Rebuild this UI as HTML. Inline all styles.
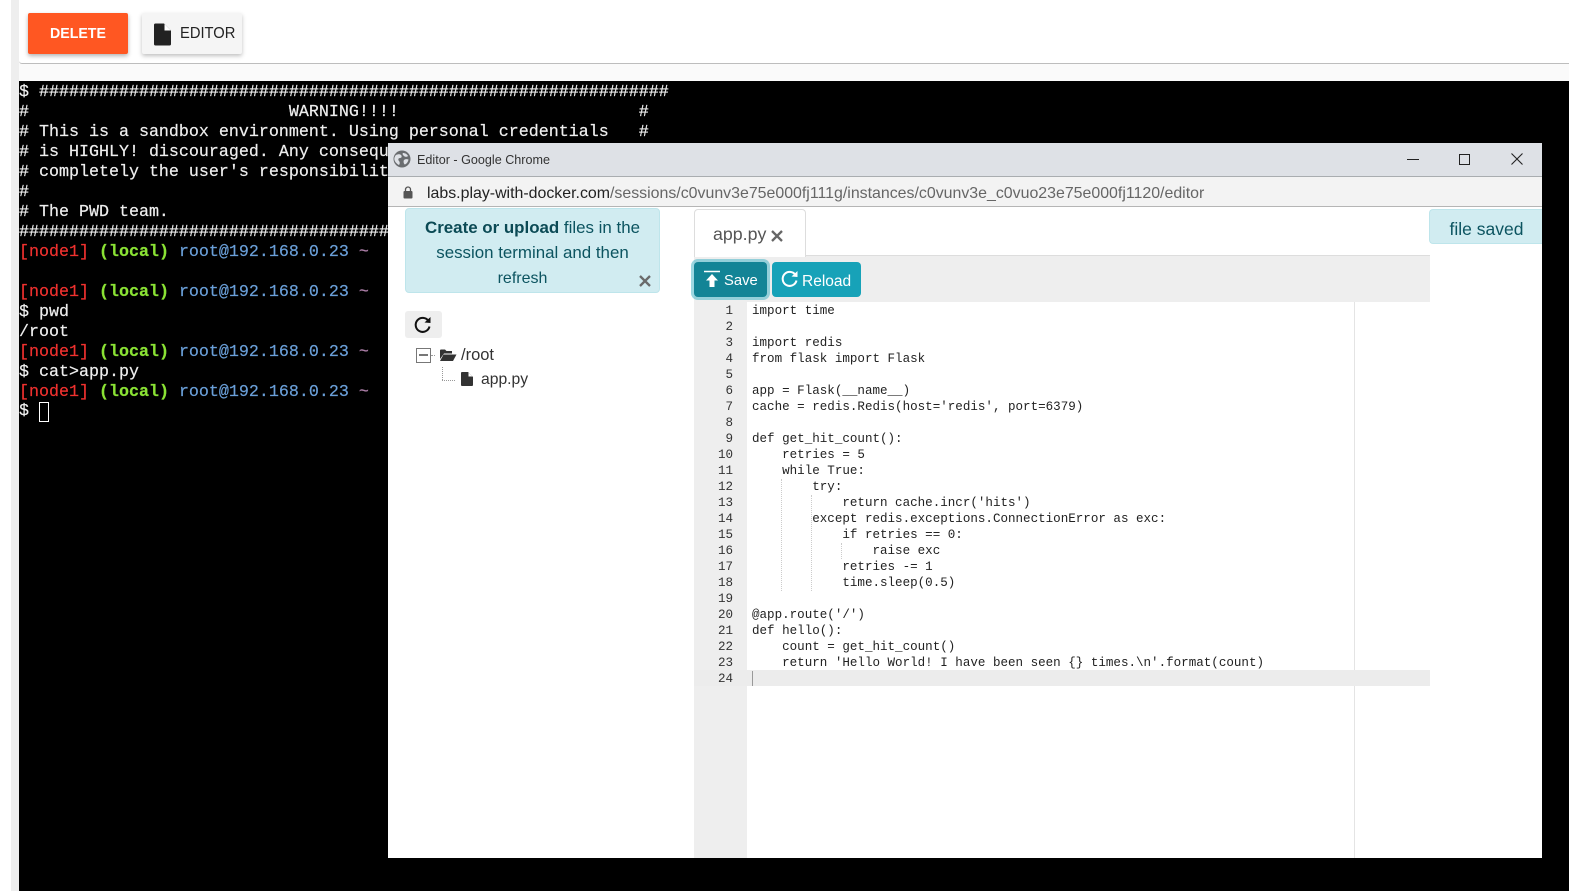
<!DOCTYPE html>
<html>
<head>
<meta charset="utf-8">
<title>Editor</title>
<style>
html,body{margin:0;padding:0;width:1569px;height:891px;overflow:hidden;background:#fafafa;font-family:"Liberation Sans",sans-serif}
.a{position:absolute}
#term{position:absolute;left:19px;top:81px;width:1550px;height:810px;background:#000;overflow:hidden}
#term div{position:absolute;left:0;margin-top:2px;height:20px;font:16.67px/20px "Liberation Mono",monospace;color:#eee;white-space:pre;-webkit-text-stroke:.2px currentColor}
.r{color:#f0312f}.g{color:#8ae234;font-weight:bold}.b{color:#6a9fd8}.p{color:#ad7fa8}
#code div{position:absolute;left:0;height:16px;font:12.55px/16px "Liberation Mono",monospace;color:#222;white-space:pre}
#nums div{position:absolute;width:39px;text-align:right;left:0;font:12.55px/16px "Liberation Mono",monospace;color:#333}
</style>
</head>
<body>
<div class="a" style="left:0;top:0;width:11px;height:891px;background:#fff"></div>
<div class="a" style="left:11px;top:0;width:8px;height:891px;background:#eee"></div>
<div class="a" style="left:19px;top:0;width:1550px;height:63px;background:#fff;border-bottom:1px solid #bdbdbd;border-radius:0 0 0 3px"></div>

<div class="a" style="left:28px;top:13px;width:100px;height:41px;background:#ff5722;border-radius:2px;box-shadow:0 2px 4px rgba(0,0,0,.3)"></div>
<div class="a" style="left:50px;top:13px;line-height:41px;font-size:15px;font-weight:bold;color:#fff;transform:scaleX(.945);transform-origin:0 50%">DELETE</div>
<div class="a" style="left:142px;top:13px;width:100px;height:41px;background:#f5f5f5;border-radius:2px;box-shadow:0 2px 4px rgba(0,0,0,.25)"></div>
<svg class="a" style="left:153px;top:23px" width="19" height="23" viewBox="0 0 19 23"><path d="M1 2a1.500 1.500 0 0 1 1.500-1.500H11l7 7V21a1.500 1.500 0 0 1-1.500 1.500h-14A1.500 1.500 0 0 1 1 21z" fill="#222"/><path d="M11.500 1v6.500H18z" fill="#fff"/></svg>
<div class="a" style="left:180px;top:13px;line-height:41px;font-size:15.500px;color:#222;transform:scaleX(.95);transform-origin:0 50%">EDITOR</div>

<div id="term">
<div style="top:0">$ ###############################################################</div>
<div style="top:20px">#                          WARNING!!!!                        #</div>
<div style="top:40px"># This is a sandbox environment. Using personal credentials   #</div>
<div style="top:60px"># is HIGHLY! discouraged. Any consequ</div>
<div style="top:80px"># completely the user's responsibilit</div>
<div style="top:100px">#</div>
<div style="top:120px"># The PWD team.</div>
<div style="top:140px">#####################################</div>
<div style="top:160px"><span class="r">[node1]</span> <span class="g">(local)</span> <span class="b">root@192.168.0.23</span> <span class="p">~</span></div>
<div style="top:200px"><span class="r">[node1]</span> <span class="g">(local)</span> <span class="b">root@192.168.0.23</span> <span class="p">~</span></div>
<div style="top:220px">$ pwd</div>
<div style="top:240px">/root</div>
<div style="top:260px"><span class="r">[node1]</span> <span class="g">(local)</span> <span class="b">root@192.168.0.23</span> <span class="p">~</span></div>
<div style="top:280px">$ cat&gt;app.py</div>
<div style="top:300px"><span class="r">[node1]</span> <span class="g">(local)</span> <span class="b">root@192.168.0.23</span> <span class="p">~</span></div>
<div style="top:319px">$</div>
<span class="a" style="left:20px;top:321px;width:8px;height:18px;border:1px solid #fff"></span>
</div>

<!-- Chrome popup -->
<div class="a" style="left:388px;top:143px;width:1154px;height:715px;background:#fff;overflow:hidden">
  <div class="a" style="left:0;top:0;width:1154px;height:33px;background:#dee1e6;border-bottom:1px solid #a9adb0"></div>
  <svg class="a" style="left:5px;top:7px" width="18" height="18" viewBox="0 0 18 18"><circle cx="9" cy="9" r="8.500" fill="#6a6d70"/><path d="M3 5c2-1 4-1 5 0s1 3-1 3-2 2-1 3 1 3 0 4c-2-1-4-3-4.500-5S2 6 3 5zM10 3c2 0 4 1 5 3-1 1-3 1-4 0s-2-2-1-3zM11 10c1-1 3-1 4.500-.5-.3 2-1.500 4-3.500 5-1 0-2-3-1-4.500z" fill="#dee1e6"/></svg>
  <div class="a" style="left:29px;top:1px;line-height:33px;font-size:12.600px;color:#333">Editor - Google Chrome</div>
  <div class="a" style="left:1019px;top:16px;width:12px;height:1px;background:#222"></div>
  <div class="a" style="left:1071px;top:11px;width:9px;height:9px;border:1px solid #222"></div>
  <svg class="a" style="left:1123px;top:10px" width="12" height="12" viewBox="0 0 12 12"><path d="M.500.500l11 11M11.500.500l-11 11" stroke="#222" stroke-width="1.100"/></svg>

  <div class="a" style="left:0;top:34px;width:1154px;height:29px;background:#f3f3f3;border-bottom:1px solid #b5b5b5"></div>
  <svg class="a" style="left:15px;top:43px" width="10" height="13" viewBox="0 0 10 13"><path d="M2.500 6V3.500a2.500 2.500 0 0 1 5 0V6" fill="none" stroke="#555" stroke-width="1.300"/><rect x=".5" y="5" width="9" height="7.500" rx="1" fill="#555"/></svg>
  <div class="a" style="left:39px;top:36px;line-height:30px;font-size:15.920px;color:#666;white-space:pre"><span style="color:#222">labs.play-with-docker.com</span>/sessions/c0vunv3e75e000fj111g/instances/c0vunv3e_c0vuo23e75e000fj1120/editor</div>

  <!-- info alert -->
  <div class="a" style="left:17px;top:65px;width:253px;height:83px;background:#d1ecf1;border:1px solid #bee5eb;border-radius:4px;color:#0c5460;font-size:16.900px;line-height:25px;text-align:center;box-sizing:content-box">
    <div style="padding:6px 6px 0 6px"><b style="color:#0b4a55">Create or upload</b> files in the session terminal and then<br><span style="position:relative;left:-10px;font-size:16px">refresh</span></div>
  </div>
  <svg class="a" style="left:251px;top:132px" width="12" height="12" viewBox="0 0 12 12"><path d="M1 1l10 10M11 1L1 11" stroke="#6a6a6a" stroke-width="2.300"/></svg>

  <!-- refresh button -->
  <div class="a" style="left:17px;top:168px;width:37px;height:27px;background:#eee;border-radius:3px"></div>
  <svg class="a" style="left:26px;top:173px" width="18" height="18" viewBox="0 0 18 18"><path d="M14.500 5A7 7 0 1 0 15.500 10.500" fill="none" stroke="#111" stroke-width="2"/><path d="M10.500 6.500L16.500 7V1z" fill="#111"/></svg>

  <!-- tree -->
  <div class="a" style="left:28px;top:205px;width:13px;height:13px;border:1px solid #777"></div>
  <div class="a" style="left:31px;top:211px;width:9px;height:2px;background:#777"></div>
  <div class="a" style="left:43px;top:212px;width:4px;border-top:1px dotted #999"></div>
  <svg class="a" style="left:51px;top:205px" width="18" height="14" viewBox="0 0 18 14"><path d="M1 2.500A1 1 0 0 1 2 1.500h4l1.500 1.500H13v2.500H5L1 11z" fill="#333"/><path d="M1 13l3.500-6.500H17.500L14 13z" fill="#333"/></svg>
  <div class="a" style="left:73px;top:200px;line-height:25px;font-size:16.500px;color:#333">/root</div>
  <div class="a" style="left:54px;top:224px;height:13px;border-left:1px dotted #999"></div>
  <div class="a" style="left:54px;top:237px;width:13px;border-top:1px dotted #999"></div>
  <svg class="a" style="left:73px;top:229px" width="12" height="14" viewBox="0 0 12 14"><path d="M0 1a1 1 0 0 1 1-1h6l5 5v8a1 1 0 0 1-1 1H1a1 1 0 0 1-1-1z" fill="#333"/><path d="M7.500 .5V4.500H11.500z" fill="#fff"/></svg>
  <div class="a" style="left:93px;top:224px;line-height:25px;font-size:15.700px;color:#333">app.py</div>

  <!-- tabs -->
  <div class="a" style="left:306px;top:112px;width:736px;height:46px;background:#eee;border-top:1px solid #ddd"></div>
  <div class="a" style="left:306px;top:66px;width:110px;height:47px;background:#fff;border:1px solid #ddd;border-bottom:0;border-radius:4px 4px 0 0"></div>
  <div class="a" style="left:325px;top:66px;line-height:50px;font-size:17.800px;color:#555">app.py</div>
  <svg class="a" style="left:383px;top:87px" width="12" height="12" viewBox="0 0 12 12"><path d="M1 1l10 10M11 1L1 11" stroke="#666" stroke-width="2.300"/></svg>

  <!-- buttons -->
  <div class="a" style="left:306px;top:119px;width:73px;height:35px;background:#138496;border-radius:4px;box-shadow:0 0 0 3px rgba(58,176,195,.5)"></div>
  <svg class="a" style="left:315px;top:127px" width="18" height="18" viewBox="0 0 18 18"><path d="M1 1.500h16" stroke="#fff" stroke-width="1.500"/><path d="M9 4l6 6.500h-3.500V17h-5v-6.500H3z" fill="#fff"/></svg>
  <div class="a" style="left:336px;top:120px;line-height:37px;font-size:14.800px;color:#fff">Save</div>
  <div class="a" style="left:384px;top:119px;width:89px;height:35px;background:#17a2b8;border-radius:4px"></div>
  <svg class="a" style="left:393px;top:127px" width="18" height="18" viewBox="0 0 18 18"><path d="M14.500 5A7 7 0 1 0 15.500 10.500" fill="none" stroke="#fff" stroke-width="2"/><path d="M10.500 6.500L16.500 7V1z" fill="#fff"/></svg>
  <div class="a" style="left:414px;top:120px;line-height:37px;font-size:15.500px;color:#fff">Reload</div>

  <!-- editor -->
  <div class="a" style="left:306px;top:159px;width:53px;height:556px;background:#eee"></div>
  <div class="a" style="left:966px;top:159px;width:1px;height:556px;background:#e4e4e4"></div>
  <div class="a" style="left:306px;top:527px;width:736px;height:16px;background:#ececec"></div>
  <div class="a" style="left:364px;top:528px;width:1px;height:15px;background:#999"></div>
  <div class="a" style="left:393px;top:336px;width:0;height:112px;border-left:1px dotted #ccc"></div>
  <div class="a" style="left:423px;top:352px;width:0;height:96px;border-left:1px dotted #ccc"></div>
  <div class="a" style="left:453px;top:400px;width:0;height:16px;border-left:1px dotted #ccc"></div>

  <div id="nums" class="a" style="left:306px;top:160px">
    <div style="top:0">1</div><div style="top:16px">2</div><div style="top:32px">3</div><div style="top:48px">4</div><div style="top:64px">5</div><div style="top:80px">6</div><div style="top:96px">7</div><div style="top:112px">8</div><div style="top:128px">9</div><div style="top:144px">10</div><div style="top:160px">11</div><div style="top:176px">12</div><div style="top:192px">13</div><div style="top:208px">14</div><div style="top:224px">15</div><div style="top:240px">16</div><div style="top:256px">17</div><div style="top:272px">18</div><div style="top:288px">19</div><div style="top:304px">20</div><div style="top:320px">21</div><div style="top:336px">22</div><div style="top:352px">23</div><div style="top:368px">24</div>
  </div>
  <div id="code" class="a" style="left:364px;top:160px">
    <div style="top:0">import time</div>
    <div style="top:32px">import redis</div>
    <div style="top:48px">from flask import Flask</div>
    <div style="top:80px">app = Flask(__name__)</div>
    <div style="top:96px">cache = redis.Redis(host='redis', port=6379)</div>
    <div style="top:128px">def get_hit_count():</div>
    <div style="top:144px">    retries = 5</div>
    <div style="top:160px">    while True:</div>
    <div style="top:176px">        try:</div>
    <div style="top:192px">            return cache.incr('hits')</div>
    <div style="top:208px">        except redis.exceptions.ConnectionError as exc:</div>
    <div style="top:224px">            if retries == 0:</div>
    <div style="top:240px">                raise exc</div>
    <div style="top:256px">            retries -= 1</div>
    <div style="top:272px">            time.sleep(0.5)</div>
    <div style="top:304px">@app.route('/')</div>
    <div style="top:320px">def hello():</div>
    <div style="top:336px">    count = get_hit_count()</div>
    <div style="top:352px">    return 'Hello World! I have been seen {} times.\n'.format(count)</div>
  </div>

  <!-- toast -->
  <div class="a" style="left:1041px;top:66px;width:113px;height:33px;background:#d1ecf1;border:1px solid #bee5eb;border-right:0;border-radius:4px 0 0 4px;box-sizing:content-box;color:#0c5460;font-size:17.500px;line-height:39px;text-align:center">file saved</div>
</div>
</body>
</html>
